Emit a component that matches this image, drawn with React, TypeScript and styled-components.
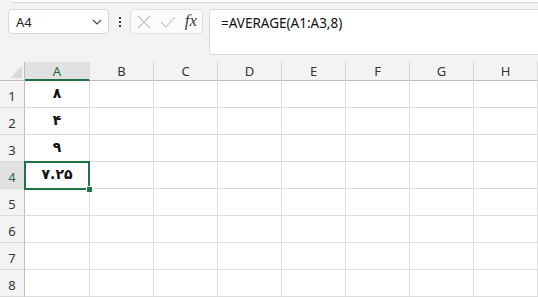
import styled, { createGlobalStyle } from 'styled-components'

const GlobalStyle = createGlobalStyle`
  html, body {
    margin: 0;
    padding: 0;
    background: #ffffff;
    overflow: hidden;
  }
  body {
    font-family: 'Noto Sans', 'DejaVu Sans', sans-serif;
  }
`

const COLUMNS = ['A', 'B', 'C', 'D', 'E', 'F', 'G', 'H']
const ROWS = 8
const ACTIVE_COL = 'A'
const ACTIVE_ROW = 4
const VALUES: Record<string, string> = {
  A1: '۸',
  A2: '۴',
  A3: '۹',
  A4: '۷.۲۵',
}

const StyledPage = styled.div`
  width: 538px;
  height: 297px;
  display: flex;
  flex-direction: column;
  background: #f3f3f3;
  overflow: hidden;
`

const StyledRibbonEdge = styled.div`
  height: 2px;
  margin-left: 12px;
  background: #ffffff;
  border-bottom-left-radius: 4px;
  box-shadow: 0 1px 1px rgba(0, 0, 0, 0.14);
`

const StyledFormulaRow = styled.div`
  display: flex;
  align-items: flex-start;
  padding: 7px 0 0 8px;
  height: 60px;
  box-sizing: border-box;
`

const StyledNameBox = styled.div`
  width: 101px;
  height: 25px;
  box-sizing: border-box;
  display: flex;
  align-items: center;
  justify-content: space-between;
  padding: 0 6px 0 7px;
  background: #ffffff;
  border: 1px solid #d6d6d6;
  border-radius: 4px;
  font-size: 13px;
  color: #222;
`

const StyledDots = styled.div`
  width: 21px;
  height: 25px;
  display: flex;
  flex-direction: column;
  align-items: center;
  justify-content: center;
  gap: 2px;

  span {
    width: 2px;
    height: 2px;
    background: #333;
  }
`

const StyledButtonGroup = styled.div`
  width: 73px;
  height: 25px;
  box-sizing: border-box;
  display: flex;
  align-items: center;
  justify-content: space-between;
  padding: 0 5px 0 6px;
  background: #fbfbfb;
  border: 1px solid #dedede;
  border-radius: 4px;
`

const StyledFx = styled.span`
  font-family: 'Liberation Serif', 'DejaVu Serif', serif;
  font-style: italic;
  font-size: 17px;
  color: #3a3a3a;
  line-height: 1;
  margin-top: -2px;
`

const StyledFormulaBar = styled.div`
  flex: 1;
  height: 46px;
  margin-left: 6px;
  box-sizing: border-box;
  padding: 4px 0 0 11px;
  background: #ffffff;
  border: 1px solid #d6d6d6;
  border-right: none;
  border-radius: 4px 0 0 4px;
  font-size: 13.5px;
  color: #111;
`

const StyledSheet = styled.div`
  display: grid;
  grid-template-columns: 25px 65px repeat(7, 64px);
  grid-template-rows: 19px repeat(${ROWS}, 27px);
  background: #ffffff;
`

const StyledCorner = styled.div`
  position: relative;
  background: #f3f3f3;
  border-right: 1px solid #bdbdbd;
  border-bottom: 1px solid #bdbdbd;
  box-sizing: border-box;

  &::after {
    content: '';
    position: absolute;
    right: 2px;
    bottom: 2px;
    width: 0;
    height: 0;
    border-left: 12px solid transparent;
    border-bottom: 12px solid #dadada;
  }
`

const StyledColHeader = styled.div<{ $active: boolean }>`
  display: flex;
  align-items: center;
  justify-content: center;
  box-sizing: border-box;
  font-size: 13px;
  background: ${(p) => (p.$active ? '#e1e1e1' : '#f3f3f3')};
  color: ${(p) => (p.$active ? '#1f6b43' : '#333')};
  border-right: 1px solid #d9d9d9;
  border-bottom: ${(p) => (p.$active ? '2px solid #217346' : '1px solid #bdbdbd')};
`

const StyledRowHeader = styled.div<{ $active: boolean }>`
  display: flex;
  align-items: flex-end;
  justify-content: center;
  padding-bottom: 2px;
  box-sizing: border-box;
  font-size: 13px;
  background: ${(p) => (p.$active ? '#e1e1e1' : '#f3f3f3')};
  color: ${(p) => (p.$active ? '#2e6b4c' : '#333')};
  border-right: 1px solid #bdbdbd;
  border-bottom: 1px solid #d9d9d9;
`

const StyledCell = styled.div<{ $active: boolean }>`
  position: relative;
  z-index: ${(p) => (p.$active ? 1 : 0)};
  display: flex;
  align-items: center;
  justify-content: center;
  box-sizing: border-box;
  border-right: 1px solid #dcdcdc;
  border-bottom: 1px solid #dcdcdc;
  font-family: 'DejaVu Sans', 'Noto Sans', sans-serif;
  font-weight: bold;
  font-size: 14px;
  color: #111;
  padding-bottom: 3px;
`

const StyledSelection = styled.div`
  position: absolute;
  left: -1px;
  top: -1px;
  right: -1px;
  bottom: -2px;
  border: 2px solid #217346;
  pointer-events: none;

  &::after {
    content: '';
    position: absolute;
    right: -4px;
    bottom: -4px;
    width: 5px;
    height: 5px;
    background: #217346;
    border-left: 1px solid #ffffff;
    border-top: 1px solid #ffffff;
  }
`

const ChevronIcon = () => (
  <svg width="10" height="6" viewBox="0 0 10 6" fill="none">
    <polyline points="1,1 5,5 9,1" stroke="#444" strokeWidth="1.1" />
  </svg>
)

const CancelIcon = () => (
  <svg width="14" height="14" viewBox="0 0 14 14" fill="none">
    <path d="M1 1 L13 13 M13 1 L1 13" stroke="#c4c4c4" strokeWidth="1.1" />
  </svg>
)

const EnterIcon = () => (
  <svg width="16" height="12" viewBox="0 0 16 12" fill="none">
    <polyline points="1,6 6,11 15,1" stroke="#c4c4c4" strokeWidth="1.1" />
  </svg>
)

export default function App() {
  return (
    <>
      <GlobalStyle />
      <StyledPage>
        <StyledRibbonEdge />
        <StyledFormulaRow>
          <StyledNameBox>
            <span>A4</span>
            <ChevronIcon />
          </StyledNameBox>
          <StyledDots>
            <span />
            <span />
            <span />
          </StyledDots>
          <StyledButtonGroup>
            <CancelIcon />
            <EnterIcon />
            <StyledFx>fx</StyledFx>
          </StyledButtonGroup>
          <StyledFormulaBar>=AVERAGE(A1:A3,8)</StyledFormulaBar>
        </StyledFormulaRow>
        <StyledSheet>
          <StyledCorner />
          {COLUMNS.map((col) => (
            <StyledColHeader key={col} $active={col === ACTIVE_COL}>
              {col}
            </StyledColHeader>
          ))}
          {Array.from({ length: ROWS }, (_, i) => i + 1).map((row) => (
            <>
              <StyledRowHeader key={`h${row}`} $active={row === ACTIVE_ROW}>
                {row}
              </StyledRowHeader>
              {COLUMNS.map((col) => {
                const ref = `${col}${row}`
                const isActive = col === ACTIVE_COL && row === ACTIVE_ROW
                return (
                  <StyledCell key={ref} $active={isActive}>
                    {VALUES[ref]}
                    {isActive && <StyledSelection />}
                  </StyledCell>
                )
              })}
            </>
          ))}
        </StyledSheet>
      </StyledPage>
    </>
  )
}
